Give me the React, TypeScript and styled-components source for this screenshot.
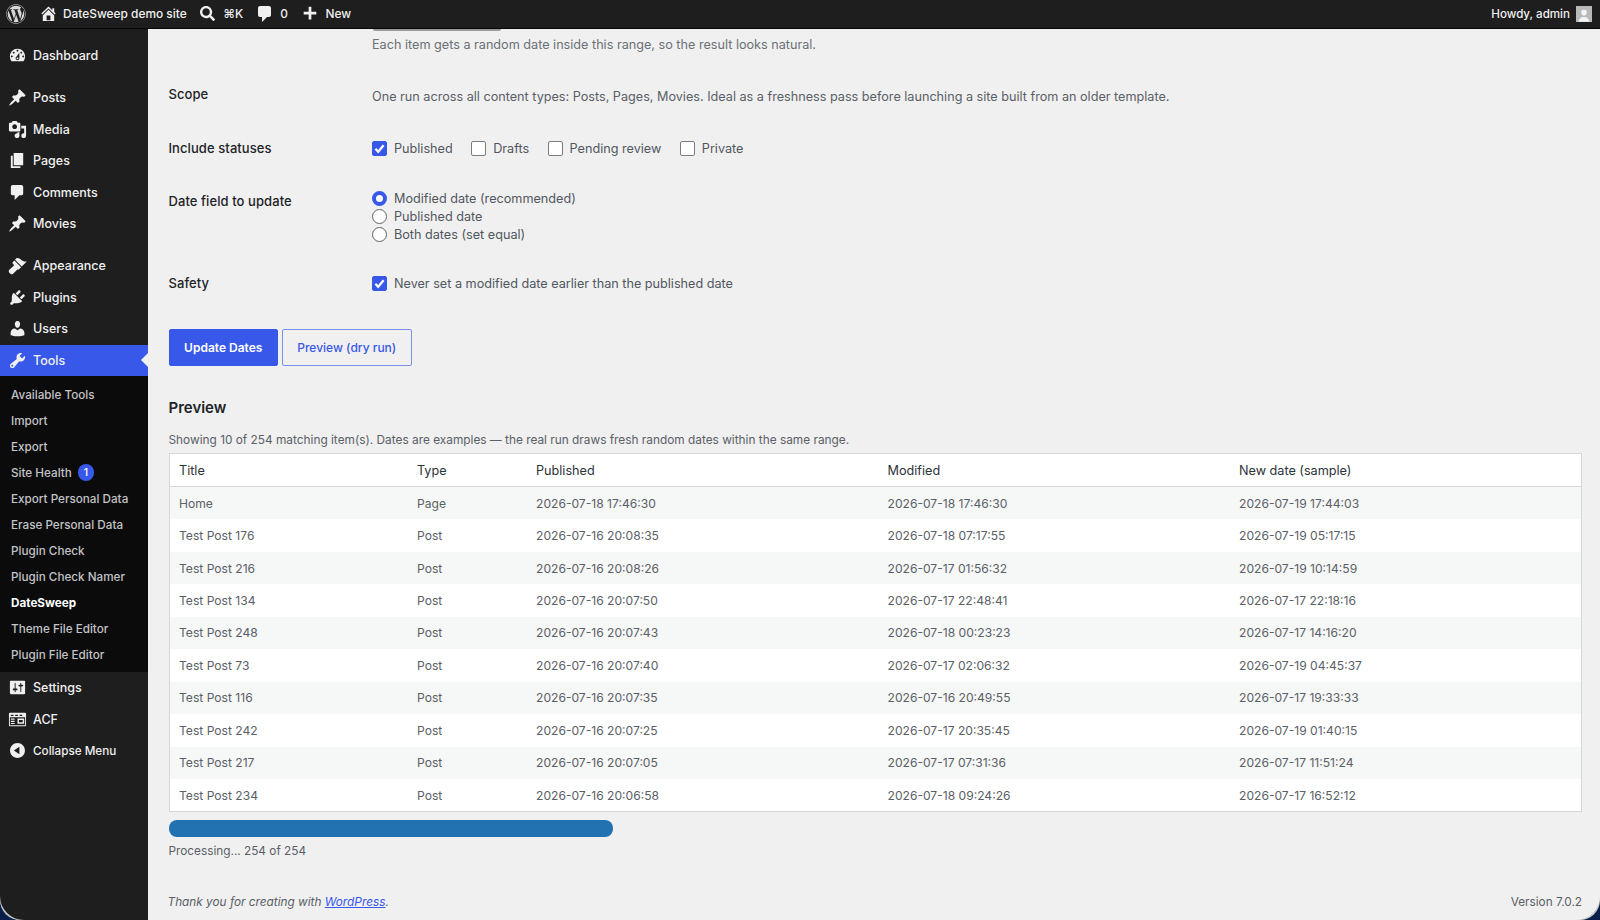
import React from "react"
import styled, { createGlobalStyle } from "styled-components"
import { FaWordpress, FaSearch } from "react-icons/fa"

const GlobalStyle = createGlobalStyle`
    html, body {
        margin: 0;
        height: 100%;
        overflow: hidden;
        background: #0a1f4a;
    }

    * {
        box-sizing: border-box;
    }
`

const paths: Record<string, string> = {
    home: "M16 8.5l1.53 1.53-1.06 1.06L10 4.62l-6.47 6.47-1.06-1.06L10 2.5l4 4v-2h2v4zm-6-2.46l6 5.99V18H4v-5.97zM12 17v-5H8v5h4z",
    comment: "M5 2h9c1.1 0 2 .9 2 2v7c0 1.1-.9 2-2 2h-2l-5 5v-5H5c-1.1 0-2-.9-2-2V4c0-1.1.9-2 2-2z",
    plus: "M17 7.5v3h-5.5V16h-3v-5.5H3v-3h5.5V2h3v5.5z",
    dashboard: "M3.76 16h12.48c1.1-1.37 1.76-3.11 1.76-5 0-4.42-3.58-8-8-8s-8 3.58-8 8c0 1.89.66 3.63 1.76 5zM10 4c.55 0 1 .45 1 1s-.45 1-1 1-1-.45-1-1 .45-1 1-1zM6 6c.55 0 1 .45 1 1s-.45 1-1 1-1-.45-1-1 .45-1 1-1zm8 0c.55 0 1 .45 1 1s-.45 1-1 1-1-.45-1-1 .45-1 1-1zm-5.37 5.55L12 7v6c0 1.1-.9 2-2 2s-2-.9-2-2c0-.57.24-1.08.63-1.45zM4 10c.55 0 1 .45 1 1s-.45 1-1 1-1-.45-1-1 .45-1 1-1zm12 0c.55 0 1 .45 1 1s-.45 1-1 1-1-.45-1-1 .45-1 1-1zm-5 3c0-.55-.45-1-1-1s-1 .45-1 1 .45 1 1 1 1-.45 1-1z",
    pin: "M10.44 3.02l1.82-1.82 6.36 6.35-1.83 1.82c-1.05-.68-2.48-.57-3.41.36l-.75.75c-.92.93-1.04 2.35-.35 3.41l-1.83 1.82-2.41-2.41-2.8 2.79c-.42.42-3.38 2.71-3.8 2.29s1.86-3.39 2.28-3.81l2.79-2.79L4.1 9.36l1.83-1.82c1.05.69 2.48.57 3.4-.36l.75-.75c.93-.92 1.05-2.35.36-3.41z",
    media: "M13 11V4c0-.55-.45-1-1-1h-1.67L9 1H5L3.67 3H2c-.55 0-1 .45-1 1v7c0 .55.45 1 1 1h10c.55 0 1-.45 1-1zM7 4.5c1.38 0 2.5 1.12 2.5 2.5S8.38 9.5 7 9.5 4.5 8.38 4.5 7 5.62 4.5 7 4.5zM14 6h5v10.5c0 1.38-1.12 2.5-2.5 2.5S14 17.88 14 16.5s1.12-2.5 2.5-2.5c.17 0 .34.02.5.05V9h-3V6zm-4 8.05V13h2v3.5c0 1.38-1.12 2.5-2.5 2.5S7 17.88 7 16.5 8.12 14 9.5 14c.17 0 .34.02.5.05z",
    page: "M6 15V2h10v13H6zm-1 1h8v2H3V5h2v11z",
    appearance: "M14.48 11.06L7.41 3.99l1.5-1.5c.5-.56 2.3-.47 3.51.32 1.21.8 1.43 1.28 2.91 2.1 1.18.64 2.45 1.26 4.45.85zm-.71.71L6.7 4.7 4.93 6.47c-.39.39-.39 1.02 0 1.41l1.06 1.06c.39.39.39 1.03 0 1.42L1.4 14.6c-.8.8-.8 2.1 0 2.9l1.1 1.1c.8.8 2.1.8 2.9 0l4.2-4.2c.39-.39 1.03-.39 1.42 0z",
    plugins: "M13.11 4.36L9.87 7.6 8 5.73l3.24-3.24c.35-.34 1.05-.2 1.56.32.52.51.66 1.21.31 1.55zm-8 1.77l.91-1.12 9.01 9.01-1.19.84c-.71.71-2.63 1.16-3.82 1.16H6.14L4.9 17.26c-.59.59-1.54.59-2.12 0-.59-.58-.59-1.53 0-2.12l1.24-1.24v-3.88c0-1.13.4-3.19 1.09-3.89zm7.26 3.97l3.24-3.24c.34-.35 1.04-.21 1.55.31.52.51.66 1.21.31 1.55l-3.24 3.25z",
    users: "M10 9.25c-2.27 0-2.73-3.44-2.73-3.44C7 4.02 7.82 2 9.97 2c2.16 0 2.98 2.02 2.71 3.81 0 0-.41 3.44-2.68 3.44zm0 2.57L12.72 10c2.39 0 4.52 2.33 4.52 4.53v2.49s-3.65 1.13-7.24 1.13c-3.65 0-7.24-1.13-7.24-1.13v-2.49c0-2.25 1.94-4.48 4.47-4.48z",
    tools: "M16.68 9.77c-1.34 1.34-3.3 1.67-4.95.99l-5.41 6.52c-.99.99-2.59.99-3.58 0s-.99-2.59 0-3.57l6.52-5.42c-.68-1.65-.35-3.61.99-4.95 1.28-1.28 3.12-1.62 4.72-1.06l-2.89 2.89 2.82 2.82 2.86-2.87c.53 1.58.18 3.39-1.08 4.65zM3.81 16.21c.4.39 1.04.39 1.43 0 .4-.4.4-1.04 0-1.43-.39-.4-1.03-.4-1.43 0-.39.39-.39 1.03 0 1.43z",
    settings: "M18 16V4c0-.55-.45-1-1-1H3c-.55 0-1 .45-1 1v12c0 .55.45 1 1 1h14c.55 0 1-.45 1-1zM8 11h1c.55 0 1 .45 1 1s-.45 1-1 1H8v1.5c0 .28-.22.5-.5.5s-.5-.22-.5-.5V13H6c-.55 0-1-.45-1-1s.45-1 1-1h1V5.5c0-.28.22-.5.5-.5s.5.22.5.5V11zm5-2h-1c-.55 0-1-.45-1-1s.45-1 1-1h1V5.5c0-.28.22-.5.5-.5s.5.22.5.5V7h1c.55 0 1 .45 1 1s-.45 1-1 1h-1v5.5c0 .28-.22.5-.5.5s-.5-.22-.5-.5V9z",
    acf: "M2 3h16a1 1 0 0 1 1 1v12a1 1 0 0 1-1 1H2a1 1 0 0 1-1-1V4a1 1 0 0 1 1-1zm0 4.5V16h16V7.5zM3 5v1.2h2.8V5zm4.6 0v1.2h2.8V5zm4.6 0v1.2H15V5zM3 9v1.2h4V9zm0 2.4v1.2h4v-1.2zm0 2.2v1.2h4v-1.2zM10 9v5.4h7V9zm1.5 1.5h4v2.4h-4z",
    collapse: "M10 2.16c4.33 0 7.84 3.51 7.84 7.84s-3.51 7.84-7.84 7.84S2.16 14.33 2.16 10 5.71 2.16 10 2.16zm2 11.72V6.12L6.18 9.97z",
    avatar: "M10 11c-2.6 0-4-2.6-4-5.2C6 3.4 7.6 2.4 10 2.4s4 1 4 3.4c0 2.6-1.4 5.2-4 5.2zm-7.6 8.6c0-3.6 3.4-6.6 7.6-6.6s7.6 3 7.6 6.6z",
}

const Screen = styled.div`
    display: flex;
    flex-direction: column;
    width: 1600px;
    height: 920px;
    overflow: hidden;
    background: #c6c7c8;
    border-radius: 0 0 20px 20px;
    font-family: Inter, "Liberation Sans", sans-serif;
`

const TopBar = styled.header`
    display: flex;
    align-items: center;
    flex: none;
    height: 29px;
    padding-bottom: 1px;
    background: #1e1e1e;
    border-bottom: 1px solid #050505;
    color: #f0f0f1;
    font-size: 11.9px;
    font-weight: 500;
`

const BarItem = styled.span<{ $left: number }>`
    display: inline-flex;
    align-items: center;
    flex: none;
    margin-left: ${props => props.$left}px;
`

const BarRight = styled.div`
    display: flex;
    align-items: center;
    margin-left: auto;
    margin-right: 8px;
    gap: 6px;
    font-size: 11.6px;
`

const Avatar = styled.span`
    display: flex;
    align-items: flex-end;
    justify-content: center;
    width: 16px;
    height: 16px;
    overflow: hidden;
    background: #b9b9b9;
`

const Body = styled.div`
    display: flex;
    flex: 1;
    min-height: 0;
`

const Sidebar = styled.nav`
    flex: none;
    width: 148px;
    padding-top: 11px;
    background: #1e1e1e;
    border-bottom-left-radius: 24px;
`

const MenuItem = styled.div<{ $active?: boolean; $gap?: boolean; $small?: boolean }>`
    position: relative;
    display: flex;
    align-items: center;
    height: 31.5px;
    margin-top: ${props => (props.$gap ? 10.5 : 0)}px;
    padding-left: 7.5px;
    gap: 6.5px;
    background: ${props => (props.$active ? "#3858e9" : "transparent")};
    color: #f0f0f1;
    font-size: ${props => (props.$small ? 11.7 : 12.5)}px;
    font-weight: 500;

    ${props => props.$active && `
        &::after {
            content: "";
            position: absolute;
            top: 50%;
            right: 0;
            margin-top: -7px;
            border: 7px solid transparent;
            border-right-color: #f0f0f1;
            border-left-width: 0;
        }
    `}
`

const SubMenu = styled.div`
    padding: 5.5px 0 4.5px;
    background: #0b0b0b;
`

const SubItem = styled.div<{ $current?: boolean }>`
    display: flex;
    align-items: center;
    height: 26px;
    padding-left: 11px;
    color: ${props => (props.$current ? "#ffffff" : "#c3c4c7")};
    font-size: 11.7px;
    font-weight: ${props => (props.$current ? 700 : 500)};
`

const Badge = styled.span`
    display: inline-flex;
    align-items: center;
    justify-content: center;
    width: 16.5px;
    height: 16.5px;
    margin-left: 6px;
    border-radius: 50%;
    background: #3858e9;
    color: #fff;
    font-size: 10.5px;
`

const Main = styled.main`
    display: flex;
    flex-direction: column;
    flex: 1;
    min-width: 0;
    padding: 0 18px 0 20.5px;
    background: #f0f0f1;
    border-bottom-right-radius: 24px;
    color: #50575e;
    font-size: 12.65px;
`

const FieldEdge = styled.div`
    flex: none;
    width: 128px;
    height: 2px;
    margin-left: 204px;
    border-radius: 0 0 2px 2px;
    background: #9a9a9c;
`

const Hint = styled.p`
    margin: 5px 0 0 203.5px;
    line-height: 18px;
    color: #6b7075;
`

const FormRow = styled.div<{ $top: number }>`
    display: grid;
    grid-template-columns: 203.5px 1fr;
    align-items: start;
    margin-top: ${props => props.$top}px;
    line-height: 18px;
`

const FieldLabel = styled.div<{ $shift?: number }>`
    margin-top: ${props => props.$shift ?? 0}px;
    color: #1d2327;
    font-size: 13px;
    font-weight: 500;
    letter-spacing: 0.08px;
`

const FieldValue = styled.div<{ $drop?: number }>`
    padding-top: ${props => props.$drop ?? 0}px;
    color: #5a6066;
`

const InlineOptions = styled.div`
    display: flex;
    gap: 18.5px;
`

const Option = styled.label<{ $pitch?: number }>`
    display: flex;
    align-items: center;
    height: ${props => props.$pitch ?? 18}px;
    gap: 7px;
    color: #50575e;
`

const OptionText = styled.span`
    padding-top: 1.5px;
`

const CheckBox = styled.span<{ $checked?: boolean }>`
    display: flex;
    align-items: center;
    justify-content: center;
    flex: none;
    width: 15px;
    height: 15px;
    border: 1px solid ${props => (props.$checked ? "#3858e9" : "#7a7c80")};
    border-radius: 2px;
    background: ${props => (props.$checked ? "#3858e9" : "#ffffff")};
`

const Radio = styled.span<{ $checked?: boolean }>`
    flex: none;
    width: 15px;
    height: 15px;
    border-radius: 50%;
    border: ${props => (props.$checked ? "4px solid #3858e9" : "1px solid #5f6368")};
    background: #ffffff;
`

const Actions = styled.div`
    display: flex;
    gap: 3.5px;
    margin-top: 36px;
`

const Button = styled.button<{ $primary?: boolean }>`
    height: 37px;
    padding: 0;
    width: ${props => (props.$primary ? 109.5 : 130.5)}px;
    border: 1px solid ${props => (props.$primary ? "#3858e9" : "#7a8ff0")};
    border-radius: 2px;
    background: ${props => (props.$primary ? "#3858e9" : "transparent")};
    color: ${props => (props.$primary ? "#ffffff" : "#3858e9")};
    font-family: inherit;
    font-size: 12px;
    font-weight: ${props => (props.$primary ? 600 : 500)};
`

const Heading = styled.h2`
    margin: 31.5px 0 0;
    line-height: 22px;
    color: #1d2327;
    font-size: 15px;
    font-weight: 600;
`

const Summary = styled.p`
    margin: 12px 0 0;
    line-height: 18px;
    color: #5a6066;
    font-size: 11.85px;
`

const Table = styled.div`
    flex: none;
    margin-top: 4px;
    border: 1px solid #d5d6d8;
    background: #ffffff;
`

const TableRow = styled.div<{ $head?: boolean; $striped?: boolean }>`
    display: grid;
    grid-template-columns: 238px 119px 351.5px 351.5px 1fr;
    align-items: center;
    height: ${props => (props.$head ? 33 : 32.45)}px;
    padding-left: 9.5px;
    border-bottom: ${props => (props.$head ? "1px solid #d5d6d8" : "0")};
    background: ${props => (props.$striped ? "#f6f7f7" : "#ffffff")};
    color: ${props => (props.$head ? "#2c3338" : "#5a6066")};
    font-size: ${props => (props.$head ? 12.65 : 12.1)}px;
`

const ProgressTrack = styled.div`
    flex: none;
    width: 444px;
    height: 16.5px;
    margin-top: 8px;
    overflow: hidden;
    border-radius: 8px;
    background: #dcdcde;
`

const ProgressFill = styled.div`
    height: 100%;
    background: #2271b1;
`

const Progress = styled.p`
    margin: 5.5px 0 0;
    line-height: 18px;
    color: #5a6066;
    font-size: 11.8px;
`

const Footer = styled.footer`
    display: flex;
    justify-content: space-between;
    margin: auto 0 9px -1px;
    line-height: 18px;
    color: #5a6066;
    font-size: 11.8px;
`

const Thanks = styled.span`
    font-style: italic;

    a {
        color: #3858e9;
    }
`

const Icon = ({ name, size = 19, color = "currentColor" }: { name: string; size?: number; color?: string }) => (
    <svg width={size} height={size} viewBox="0 0 20 20" fill={color} fillRule="evenodd" aria-hidden="true">
        <path d={paths[name]} />
    </svg>
)

const Check = () => (
    <svg width="13" height="13" viewBox="0 0 13 13" fill="none" stroke="#fff" strokeWidth="2.2" aria-hidden="true">
        <path d="M2.4 6.8l2.8 3 5.4-6.6" />
    </svg>
)

const menuTop = [
    { icon: "pin", label: "Posts", gap: true },
    { icon: "media", label: "Media" },
    { icon: "page", label: "Pages" },
    { icon: "comment", label: "Comments" },
    { icon: "pin", label: "Movies" },
    { icon: "appearance", label: "Appearance", gap: true },
    { icon: "plugins", label: "Plugins" },
    { icon: "users", label: "Users" },
]

const subItems = [
    "Available Tools",
    "Import",
    "Export",
    "Site Health",
    "Export Personal Data",
    "Erase Personal Data",
    "Plugin Check",
    "Plugin Check Namer",
    "DateSweep",
    "Theme File Editor",
    "Plugin File Editor",
]

const rows = [
    ["Home", "Page", "2026-07-18 17:46:30", "2026-07-18 17:46:30", "2026-07-19 17:44:03"],
    ["Test Post 176", "Post", "2026-07-16 20:08:35", "2026-07-18 07:17:55", "2026-07-19 05:17:15"],
    ["Test Post 216", "Post", "2026-07-16 20:08:26", "2026-07-17 01:56:32", "2026-07-19 10:14:59"],
    ["Test Post 134", "Post", "2026-07-16 20:07:50", "2026-07-17 22:48:41", "2026-07-17 22:18:16"],
    ["Test Post 248", "Post", "2026-07-16 20:07:43", "2026-07-18 00:23:23", "2026-07-17 14:16:20"],
    ["Test Post 73", "Post", "2026-07-16 20:07:40", "2026-07-17 02:06:32", "2026-07-19 04:45:37"],
    ["Test Post 116", "Post", "2026-07-16 20:07:35", "2026-07-16 20:49:55", "2026-07-17 19:33:33"],
    ["Test Post 242", "Post", "2026-07-16 20:07:25", "2026-07-17 20:35:45", "2026-07-19 01:40:15"],
    ["Test Post 217", "Post", "2026-07-16 20:07:05", "2026-07-17 07:31:36", "2026-07-17 11:51:24"],
    ["Test Post 234", "Post", "2026-07-16 20:06:58", "2026-07-18 09:24:26", "2026-07-17 16:52:12"],
]

export default function App() {
    return (
        <Screen>
            <GlobalStyle />
            <TopBar>
                <BarItem $left={6}><FaWordpress size={20} color="#d5d6d8" /></BarItem>
                <BarItem $left={13}><Icon name="home" size={19} /></BarItem>
                <BarItem $left={5}>DateSweep demo site</BarItem>
                <BarItem $left={13.6}><FaSearch size={15} /></BarItem>
                <BarItem $left={8}>⌘K</BarItem>
                <BarItem $left={11.6}><Icon name="comment" size={20} /></BarItem>
                <BarItem $left={5.4}>0</BarItem>
                <BarItem $left={13.3}><Icon name="plus" size={18} /></BarItem>
                <BarItem $left={6.4}>New</BarItem>
                <BarRight>
                    Howdy, admin
                    <Avatar><Icon name="avatar" size={14} color="#f4f4f4" /></Avatar>
                </BarRight>
            </TopBar>
            <Body>
                <Sidebar>
                    <MenuItem><Icon name="dashboard" />Dashboard</MenuItem>
                    {menuTop.map(item => (
                        <MenuItem key={item.label} $gap={item.gap}>
                            <Icon name={item.icon} />{item.label}
                        </MenuItem>
                    ))}
                    <MenuItem $active><Icon name="tools" />Tools</MenuItem>
                    <SubMenu>
                        {subItems.map(label => (
                            <SubItem key={label} $current={label === "DateSweep"}>
                                {label}
                                {label === "Site Health" && <Badge>1</Badge>}
                            </SubItem>
                        ))}
                    </SubMenu>
                    <MenuItem><Icon name="settings" />Settings</MenuItem>
                    <MenuItem><Icon name="acf" />ACF</MenuItem>
                    <MenuItem $small><Icon name="collapse" />Collapse Menu</MenuItem>
                </Sidebar>
                <Main>
                    <FieldEdge />
                    <Hint>Each item gets a random date inside this range, so the result looks natural.</Hint>

                    <FormRow $top={31}>
                        <FieldLabel>Scope</FieldLabel>
                        <FieldValue $drop={3}>One run across all content types: Posts, Pages, Movies. Ideal as a freshness pass before launching a site built from an older template.</FieldValue>
                    </FormRow>

                    <FormRow $top={33}>
                        <FieldLabel>Include statuses</FieldLabel>
                        <InlineOptions>
                            <Option><CheckBox $checked><Check /></CheckBox><OptionText>Published</OptionText></Option>
                            <Option><CheckBox /><OptionText>Drafts</OptionText></Option>
                            <Option><CheckBox /><OptionText>Pending review</OptionText></Option>
                            <Option><CheckBox /><OptionText>Private</OptionText></Option>
                        </InlineOptions>
                    </FormRow>

                    <FormRow $top={32}>
                        <FieldLabel $shift={3}>Date field to update</FieldLabel>
                        <FieldValue>
                            <Option $pitch={18.25}><Radio $checked /><OptionText>Modified date (recommended)</OptionText></Option>
                            <Option $pitch={18.25}><Radio /><OptionText>Published date</OptionText></Option>
                            <Option $pitch={18.25}><Radio /><OptionText>Both dates (set equal)</OptionText></Option>
                        </FieldValue>
                    </FormRow>

                    <FormRow $top={30.75}>
                        <FieldLabel $shift={-0.5}>Safety</FieldLabel>
                        <Option><CheckBox $checked><Check /></CheckBox><OptionText>Never set a modified date earlier than the published date</OptionText></Option>
                    </FormRow>

                    <Actions>
                        <Button $primary>Update Dates</Button>
                        <Button>Preview (dry run)</Button>
                    </Actions>

                    <Heading>Preview</Heading>
                    <Summary>Showing 10 of 254 matching item(s). Dates are examples — the real run draws fresh random dates within the same range.</Summary>

                    <Table>
                        <TableRow $head>
                            <span>Title</span>
                            <span>Type</span>
                            <span>Published</span>
                            <span>Modified</span>
                            <span>New date (sample)</span>
                        </TableRow>
                        {rows.map((row, index) => (
                            <TableRow key={row[0]} $striped={index % 2 === 0}>
                                {row.map((cell, cellIndex) => <span key={cellIndex}>{cell}</span>)}
                            </TableRow>
                        ))}
                    </Table>

                    <ProgressTrack><ProgressFill style={{ width: `${(254 / 254) * 100}%` }} /></ProgressTrack>
                    <Progress>Processing... 254 of 254</Progress>

                    <Footer>
                        <Thanks>Thank you for creating with <a href="#wp">WordPress</a>.</Thanks>
                        <span>Version 7.0.2</span>
                    </Footer>
                </Main>
            </Body>
        </Screen>
    )
}
